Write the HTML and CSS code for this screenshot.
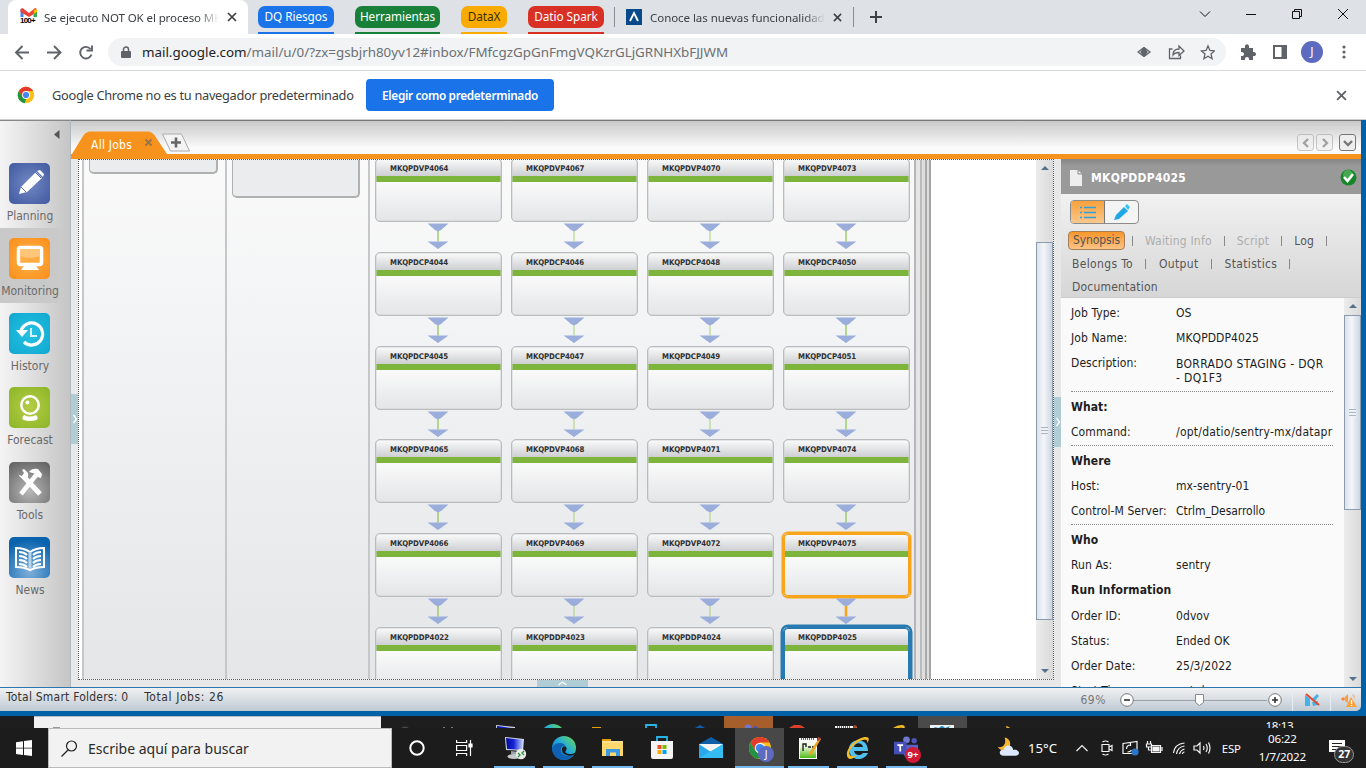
FILE: index.html
```html
<!DOCTYPE html>
<html lang="es">
<head>
<meta charset="utf-8">
<title>Control-M</title>
<link rel="stylesheet" href="styles.css">
</head>
<body>
<svg class="defs" aria-hidden="true">
  <defs>
    <linearGradient id="gEdge" x1="0" y1="1" x2="1" y2="0"><stop offset="0" stop-color="#0c59a4"/><stop offset=".5" stop-color="#1fa5e4"/><stop offset="1" stop-color="#6be24a"/></linearGradient>
    <linearGradient id="gScreen" x1="0" x2="1"><stop offset="0" stop-color="#000b9c"/><stop offset=".45" stop-color="#1523d8"/><stop offset="1" stop-color="#c5d4f8"/></linearGradient>
    <linearGradient id="gNpp" x2="0" y2="1"><stop offset="0" stop-color="#fff"/><stop offset=".4" stop-color="#e8f8d8"/><stop offset="1" stop-color="#4fb814"/></linearGradient>
    <symbol id="arrow" viewBox="0 0 22 31"><path d="M.5 1.500h21L14 8h-6zM.5 19.500h21L11 27z" fill="#9aaddb"/><path d="M7 7.500h8l-4 2z" fill="#9aaddb"/><path d="M11 9v10.500" stroke="currentColor" stroke-width="var(--w,1.2)"/></symbol>
    <symbol id="x" viewBox="0 0 10 10"><path d="M1 1l8 8M9 1l-8 8" fill="none" stroke="currentColor" stroke-width="1.7"/></symbol>
    <symbol id="pc" viewBox="0 0 24 24"><path d="M2 1l19 2-1 12-17-1z" fill="#d9dce2"/><path d="M3 2l17 1.800-1 10.200-15-1z" fill="url(#gScreen)"/><path d="M8 15l7 1v3l-7-1z" fill="#9ba0a6"/><ellipse cx="11" cy="20.500" rx="6.500" ry="2.500" fill="#c6c9cc"/><circle cx="18" cy="18" r="5.200" fill="#e8ebe8"/><path d="M15 17l2 2-2 2M21 15l-2 2 2 2" stroke="#2c8b3c" fill="none" stroke-width="1.300"/></symbol>
    <symbol id="edge" viewBox="0 0 24 24"><circle cx="12" cy="12" r="12" fill="url(#gEdge)"/><path d="M0 12C3 6 12 5 14 11c-2-3-6 0-5 4 1 5 7 6 13 3-5 9-21 8-22-6z" fill="#0f61b4"/><path d="M14 11c2 3-2 4 0 6 3 2 8 1 10-1l-1 2c-6 4-14 0-13-5 0-2 2-4 4-2z" fill="#1c1c1c"/></symbol>
    <symbol id="folder" viewBox="0 0 24 24"><path d="M1 3h9v5H1z" fill="#e5a000"/><path d="M1 5h21v15H1z" fill="#ffd76a"/><path d="M5 20v-7h14v7h-4v-3.500H9V20z" fill="#3c9be0"/><path d="M1 5h21v1.500H1z" fill="#ffe59b"/></symbol>
    <symbol id="store" viewBox="0 0 24 24"><path d="M7 5V1h10v4" fill="none" stroke="#28b4e8" stroke-width="1.800"/><path d="M1 5h22v16q0 2-2 2H3q-2 0-2-2z" fill="#f4f4f4"/><path d="M7.500 9h4v4h-4z" fill="#f25022"/><path d="M12.500 9h4v4h-4z" fill="#7fba00"/><path d="M7.500 14h4v4h-4z" fill="#ffa800"/><path d="M12.500 14h4v4h-4z" fill="#00a4ef"/></symbol>
    <symbol id="mail" viewBox="0 0 24 24"><path d="M0 8l12-7 12 7v4H0z" fill="#0f5ea8"/><path d="M0 8h24v14H0z" fill="#28a8ea"/><path d="M0 8h24l-12 8z" fill="#fff"/><path d="M0 8v14l24-14v14H0z" fill="#35bdf2"/><path d="M2 8h20l-10 6z" fill="#f3f3f3"/></symbol>
    <symbol id="chrome" viewBox="0 0 24 24"><circle cx="12" cy="12" r="11" fill="#fbc116"/><path d="M2.500 6.500A11 11 0 0 1 21.500 6.500H12L7.200 15z" fill="#e33b2e"/><path d="M2.500 6.500L7.200 14.700 12 17l-1.500 6A11 11 0 0 1 2.500 6.500z" fill="#229342"/><circle cx="12" cy="12" r="5.200" fill="#fff"/><circle cx="12" cy="12" r="4.100" fill="#4285f4"/></symbol>
    <symbol id="npp" viewBox="0 0 24 24"><path d="M2 2h18v21H2z" fill="#fff"/><path d="M3 3h16v19H3z" fill="url(#gNpp)"/><path d="M4 3h14" stroke="#666" stroke-width="2" stroke-dasharray="1 1"/><path d="M6 15V8h3v3M11 11h3M15 11h3" fill="none" stroke="#222" stroke-width="1.400"/><path d="M22 2l2 1-9 15-3 2 1-4z" fill="#eea51f"/><path d="M21 1l3 1-2 3-2-1z" fill="#b34436"/></symbol>
    <symbol id="ie" viewBox="0 0 24 24"><path d="M22 15H8c1 5 7 5 9 2h5C17 27 3 24 3 13 3 2 22 0 22 15zM8 11h9c-1-5-8-5-9 0z" fill="#4ec1ee"/><path d="M2 22C-3 15 10 1 20 1c4 0 3 4 1 6 1-3-1-4-4-3C9 6 1 15 4 19c1 2 5 1 7 0-4 4-7 5-9 3z" fill="#f2bb28"/></symbol>
    <symbol id="teams" viewBox="0 0 26 26"><circle cx="13" cy="4" r="3.500" fill="#7178d4"/><circle cx="21" cy="5" r="2.800" fill="#4d55b8"/><path d="M9 9h16v9q-2 6-8 5-7 0-8-7z" fill="#5a62c8"/><path d="M0 6h13v13H0z" fill="#464eb8"/><path d="M3.500 9.500h6M6.500 9.500V16" stroke="#fff" stroke-width="1.800"/></symbol>
    <symbol id="weather" viewBox="0 0 24 24"><path d="M8 1c6 1 8 8 3 12-4 3-9 1-10-2 6 1 9-4 7-10z" fill="#f7b72c"/><path d="M7 20c-6 0-5-7 0-6 1-6 9-6 10 0 7-1 8 6 2 6z" fill="#dce8fb"/></symbol>
  </defs>
</svg>

<div class="tabstrip">
  <div class="tab active">
    <svg class="gmail" width="17" height="17" viewBox="0 0 17 17"><path d="M.5 9V1l3 2v6z" fill="#4285f4"/><path d="M.5 1l2-1L9 5l6-5 2 1v3L9 9 .5 4z" fill="#ea4335"/><path d="M13.500 4L17 1v8h-3.500z" fill="#34a853"/><path d="M13.500 2L17 1v3l-3 2z" fill="#fbbc04"/></svg>
    <b class="count">100+</b>
    <span class="title">Se ejecuto NOT OK el proceso MKQ</span>
    <svg class="close" width="10" height="10"><use href="#x"/></svg>
  </div>
  <span class="group blue">DQ Riesgos</span>
  <span class="group green">Herramientas</span>
  <span class="group yellow">DataX</span>
  <span class="group red">Datio Spark</span>
  <div class="tab plain">
    <svg width="16" height="16"><path d="M0 0h16v16H0z" fill="#08498c"/><path d="M4 12l4-8 4 8" fill="none" stroke="#fff" stroke-width="1.800"/></svg>
    <span class="title">Conoce las nuevas funcionalidades</span>
    <svg class="close" width="9" height="9"><use href="#x"/></svg>
  </div>
  <svg class="plus" width="12" height="12"><path d="M6 0v12M0 6h12" stroke="#3c4043" stroke-width="2"/></svg>
  <svg class="winbtns" width="152" height="16" fill="none" stroke="#111"><path d="M2 5.500l5 5 5-5M48 8.500h10M94.500 5.500h7v7h-7zM96.500 5.500v-2h7v7h-2M140 3l10 10M150 3l-10 10"/></svg>
</div>

<div class="toolbar">
  <svg class="nav" width="84" height="20" fill="none" stroke="#5f6368" stroke-width="1.900"><path d="M15 10.500H2.500M8.500 4L2 10.500 8.500 17M33 10.500h12.500M40 4l6.500 6.500L40 17M76.500 7A5.800 5.800 0 1 0 77.500 12.500M78 3.500V8.500H72.500"/></svg>
  <div class="omnibox">
    <svg width="10" height="13"><path d="M2.500 5V3.500a2.500 2.500 0 0 1 5 0V5" fill="none" stroke="#5f6368" stroke-width="1.500"/><path d="M1 5h8q1 0 1 1v5q0 1-1 1H1q-1 0-1-1V6q0-1 1-1z" fill="#5f6368"/></svg>
    <span class="url"><i>mail.google.com</i>/mail/u/0/?zx=gsbjrh80yv12#inbox/FMfcgzGpGnFmgVQKzrGLjGRNHXbFJJWM</span>
    <svg class="omni" width="78" height="18" fill="none" stroke="#5f6368" stroke-width="1.300"><path d="M1 9l6-4.500L13 9l-6 4.500z" /><path d="M7 5l3 4-3 4-3-4z" fill="#5f6368"/><path d="M35.500 6h-3v9.500h11v-3M36 12c0-4 2-6 6-6V3l5 5-5 4.500V9.500c-3 0-5 1-6 2.500z"/><path d="M71 3l1.900 4.500 4.600.4-3.500 3.100 1.100 4.700-4.100-2.500-4.100 2.500 1.100-4.700-3.500-3.100 4.600-.4z"/></svg>
  </div>
  <svg width="16" height="16"><path d="M1 4h4c-1-5 5-5 4 0h4v4c4-1 4 5 0 4v4H9c1-4-5-4-4 0H1v-4c4 1 4-5 0-4z" fill="#5f6368"/></svg>
  <svg width="14" height="14"><path d="M1 1h12v12H1z" fill="none" stroke="#5f6368" stroke-width="2"/><path d="M8.500 1H13v12H8.500z" fill="#5f6368"/></svg>
  <span class="avatar">J</span>
  <svg class="dots" width="4" height="14" fill="#5f6368"><circle cx="2" cy="2" r="1.600"/><circle cx="2" cy="7" r="1.600"/><circle cx="2" cy="12" r="1.600"/></svg>
</div>

<div class="infobar">
  <svg width="18" height="18"><use href="#chrome"/></svg>
  <span>Google Chrome no es tu navegador predeterminado</span>
  <button>Elegir como predeterminado</button>
  <svg class="dismiss" width="11" height="11"><use href="#x"/></svg>
</div>

<div class="app">
  <div class="appbody">
    <nav class="side">
      <svg class="collapse" width="6" height="10"><path d="M5.500 0v9L0 4.500z" fill="#555"/></svg>
      <div class="item"><span class="ico planning"><svg width="41" height="41"><path d="M10 31l2-7L27 9l6 6-15 14z" fill="#fff"/><path d="M28 8l3-1 4 4-1 3z" fill="#fff"/><path d="M26 9l6 6M12 24l5 5" stroke="#5471b5"/></svg></span>Planning</div>
      <div class="item on"><span class="ico monitoring"><svg width="41" height="41"><rect x="9.500" y="9.500" width="23" height="17" rx="2" fill="#ffac43" stroke="#fff" stroke-width="3.500"/><path d="M11 11h20v7q-10 4-20 0z" fill="#ffc67a"/><path d="M15 28h12l3 4H12z" fill="#fff"/></svg></span>Monitoring</div>
      <div class="item"><span class="ico history"><svg width="41" height="41"><path d="M12 18A11 11 0 1 1 15 29" fill="none" stroke="#fff" stroke-width="3.200"/><path d="M7 17h12l-6 7z" fill="#fff"/><path d="M22 15v8h6" fill="none" stroke="#d8f4fa" stroke-width="2"/></svg></span>History</div>
      <div class="item"><span class="ico forecast"><svg width="41" height="41"><circle cx="21" cy="18" r="8.700" fill="none" stroke="#fff" stroke-width="2.500"/><path d="M15 28q6 3 12 0 3 3 .5 5-6.500 2-13 0-2.500-2 .5-5z" fill="#fff"/><circle cx="18.500" cy="15.500" r="2" fill="#fff"/></svg></span>Forecast</div>
      <div class="item"><span class="ico tools"><svg width="41" height="41"><path d="M14 14l17 18" stroke="#fff" stroke-width="5"/><path d="M9 9q1 9 8 8 3-2 2-6l-4-4-2 1 2 3-2 3-3-1z" fill="#fff"/><path d="M28 12L12 32" stroke="#fff" stroke-width="4.500"/><path d="M20 10q3-4 9-3l4 5-1 4-4-1-1-3z" fill="#fff"/></svg></span>Tools</div>
      <div class="item"><span class="ico news"><svg width="41" height="41" fill="none" stroke="#fff"><path d="M7 11q8 0 14 4 6-4 14-4v19q-8 0-14 3-6-3-14-3z" stroke-width="2"/><path d="M21 15v17" stroke-width="3" stroke="#b8d4ea"/><path d="M10 15q5 0 8 3M10 19q5 0 8 3M10 23q5 0 8 3M10 27q5 0 8 3M32 15q-5 0-8 3M32 19q-5 0-8 3M32 23q-5 0-8 3M32 27q-5 0-8 3" stroke-width="2"/></svg></span>News</div>
    </nav>

    <main class="main">
      <div class="jobtabs">
        <svg class="alljobs" width="120" height="25"><path d="M0 25L11 7q3-4.500 7-4.500h58q4 0 7 4.500l12 18z" fill="#f7931d"/><path d="M90.500 5h19l8 17h-19z" fill="#f4f4f4" stroke="#aaa"/><path d="M104 8.500v10M99 13.500h10" stroke="#666" stroke-width="2.600"/><path d="M73.500 10.500l6 6M79.500 10.500l-6 6" stroke="#99744a" stroke-width="2"/></svg>
        <span class="tabname">All Jobs</span>
        <span class="pager dim"><svg width="10" height="10"><path d="M7 1L3 5l4 4" /></svg></span>
        <span class="pager dim"><svg width="10" height="10"><path d="M3 1l4 4-4 4"/></svg></span>
        <span class="pager last"><svg width="10" height="10"><path d="M1 3l4 4 4-4"/></svg></span>
      </div>
      <div class="workspace">
        <div class="gutter"><span class="grip left"><svg width="7" height="50"><path d="M2.500 21l3 4-3 4" fill="none" stroke="#fff" stroke-width="1.300"/></svg></span></div>
        <div class="center">
          <div class="canvas">
            <div class="folder f1"><div class="stub"></div></div>
            <div class="folder f2"><div class="stub tall"></div></div>
            <div class="folder f3">
              <div class="grid">
                <div class="job">MKQPDVP4064</div><div class="job">MKQPDVP4067</div><div class="job">MKQPDVP4070</div><div class="job">MKQPDVP4073</div>
                <svg class="link"><use href="#arrow"/></svg><svg class="link pale"><use href="#arrow"/></svg><svg class="link pale"><use href="#arrow"/></svg><svg class="link"><use href="#arrow"/></svg>
                <div class="job">MKQPDCP4044</div><div class="job">MKQPDCP4046</div><div class="job">MKQPDCP4048</div><div class="job">MKQPDCP4050</div>
                <svg class="link"><use href="#arrow"/></svg><svg class="link pale"><use href="#arrow"/></svg><svg class="link pale"><use href="#arrow"/></svg><svg class="link"><use href="#arrow"/></svg>
                <div class="job">MKQPDCP4045</div><div class="job">MKQPDCP4047</div><div class="job">MKQPDCP4049</div><div class="job">MKQPDCP4051</div>
                <svg class="link"><use href="#arrow"/></svg><svg class="link pale"><use href="#arrow"/></svg><svg class="link pale"><use href="#arrow"/></svg><svg class="link"><use href="#arrow"/></svg>
                <div class="job">MKQPDVP4065</div><div class="job">MKQPDVP4068</div><div class="job">MKQPDVP4071</div><div class="job">MKQPDVP4074</div>
                <svg class="link"><use href="#arrow"/></svg><svg class="link pale"><use href="#arrow"/></svg><svg class="link pale"><use href="#arrow"/></svg><svg class="link"><use href="#arrow"/></svg>
                <div class="job">MKQPDVP4066</div><div class="job">MKQPDVP4069</div><div class="job">MKQPDVP4072</div><div class="job near">MKQPDVP4075</div>
                <svg class="link"><use href="#arrow"/></svg><svg class="link pale"><use href="#arrow"/></svg><svg class="link pale"><use href="#arrow"/></svg><svg class="link hot"><use href="#arrow"/></svg>
                <div class="job">MKQPDDP4022</div><div class="job">MKQPDDP4023</div><div class="job">MKQPDDP4024</div><div class="job picked">MKQPDDP4025</div>
              </div>
            </div>
            <div class="frames"></div>
            <div class="scroll"><i class="up"></i><i class="thumb"></i><i class="down"></i></div>
          </div>
          <div class="under"><span class="grip bottom"><svg width="51" height="7"><path d="M21.500 5l4-3 4 3" fill="none" stroke="#fff" stroke-width="1.300"/></svg></span></div>
        </div>
        <div class="gutter"><span class="grip right"><svg width="7" height="50"><path d="M2.500 21l3 4-3 4" fill="none" stroke="#fff" stroke-width="1.300"/></svg></span></div>

        <aside class="panel">
          <header><svg width="12" height="16"><path d="M0 0h8l4 4v12H0z" fill="#eee"/><path d="M8 0v4h4" fill="none" stroke="#888"/></svg><b>MKQPDDP4025</b><svg width="17" height="17"><circle cx="8.500" cy="8.500" r="8" fill="#15872a"/><circle cx="8" cy="6" r="5" fill="#46a94f"/><path d="M4 8l3.500 4L13 5" fill="none" stroke="#fff" stroke-width="2.600"/></svg></header>
          <div class="controls">
            <div class="toggle"><span class="sel"><svg width="18" height="14"><path d="M5 2.500h12M5 7.500h12M5 12.500h12M1 2.500h2M1 7.500h2M1 12.500h2" stroke="#2fa0da" stroke-width="1.700"/></svg></span><span><svg width="18" height="18"><path d="M1 17l2-5 8-8 4 4-9 8z" fill="#20a7e6"/><path d="M12 3l2-2 3 3-2 3z" fill="#35c3f4"/></svg></span></div>
            <div class="links l1"><em>Synopsis</em><s></s><span class="off">Waiting Info</span><s></s><span class="off">Script</span><s></s><span>Log</span><s></s></div>
            <div class="links l2"><span>Belongs To</span><s></s><span>Output</span><s></s><span>Statistics</span><s></s></div>
            <div class="links l3"><span>Documentation</span></div>
          </div>
          <div class="details">
            <div class="fields">
              <p><span>Job Type:</span>OS</p>
              <p><span>Job Name:</span>MKQPDDP4025</p>
              <p class="two"><span>Description:</span><q>BORRADO STAGING - DQR<br>- DQ1F3</q></p>
              <hr>
              <p><b>What:</b></p>
              <p class="wide"><span>Command:</span>/opt/datio/sentry-mx/datapr</p>
              <hr>
              <p><b>Where</b></p>
              <p><span>Host:</span>mx-sentry-01</p>
              <p class="snug"><span>Control-M Server:</span>Ctrlm_Desarrollo</p>
              <hr>
              <p><b>Who</b></p>
              <p><span>Run As:</span>sentry</p>
              <p><b>Run Information</b></p>
              <p><span>Order ID:</span>0dvov</p>
              <p><span>Status:</span>Ended OK</p>
              <p><span>Order Date:</span>25/3/2022</p>
              <p><span>Start Time:</span>unt doc</p>
            </div>
            <div class="scroll slim"><i class="up"></i><i class="thumb"></i><i class="down"></i></div>
          </div>
        </aside>
      </div>
    </main>
  </div>
  <div class="status">
    <span>Total Smart Folders: 0</span><span>Total Jobs: 26</span>
    <span class="zoom">69%</span>
    <svg width="156" height="16"><path d="M14 8.500h134" stroke="#999fa5"/><circle cx="8" cy="8" r="6.300" fill="#fff" stroke="#777"/><path d="M5 8h6" stroke="#333" stroke-width="1.600"/><path d="M76.500 2.500h8v8l-4 3-4-3z" fill="#fff" stroke="#888"/></svg>
    <svg class="zplus" width="14" height="14"><circle cx="7" cy="7" r="6.300" fill="#fff" stroke="#777"/><path d="M4 7h6M7 4v6" stroke="#333" stroke-width="1.600"/></svg>
    <span class="cell"><svg width="16" height="14"><path d="M1 2l5 4v7H1zM8 6l5-5 2 2-4 5zM8 9l6-1-1 4-4 1z" fill="#43b4e8"/><path d="M2 1l13 11" stroke="#e2482e" stroke-width="2"/></svg></span>
    <span class="cell end"><svg width="16" height="14"><path d="M0 6l2-2 2 2-2 2z" fill="#f5863c"/><path d="M3 5l4-4v9L4 8zM11 1q3 1 3 5" fill="#f5a04c"/><path d="M10 4l6 10H5z" fill="#f9a13c"/><path d="M10.500 7v4M10.500 12v1" stroke="#fff" stroke-width="1.300"/></svg></span>
  </div>
</div>

<div class="oldbar">
  <div class="oldsearch"><i></i></div>
  <svg class="oldleft" width="100" height="12" fill="#777"><path d="M20 11.500q4-1.500 8 0zM62 11h2v1h-2zM70 11h2v1h-2z"/></svg>
  <div class="apps">
    <span><svg width="24" height="24"><use href="#pc"/></svg></span>
    <span><svg width="24" height="24"><use href="#edge"/></svg></span>
    <span><svg width="24" height="24"><use href="#folder"/></svg></span>
    <span><svg width="24" height="24"><use href="#store"/></svg></span>
    <span><svg width="24" height="24"><use href="#mail"/></svg></span>
    <span class="alert"><svg width="24" height="24"><use href="#teams"/></svg></span>
    <span><svg width="24" height="24"><use href="#chrome"/></svg></span>
    <span><svg width="24" height="24"><use href="#npp"/></svg></span>
    <span><svg width="24" height="24"><use href="#ie"/></svg></span>
    <span class="lit"><svg width="24" height="24"><path d="M0 1h24v23H0z" fill="#f2f2f2"/><path d="M9 4q3-4 6 0l5-2-3 5H7L4 3z" fill="#2189bd"/></svg></span>
  </div>
  <svg class="oldmoon" width="24" height="24"><use href="#weather"/></svg>
  <span class="oldclock">18:13</span>
</div>

<div class="taskbar">
  <span class="start"><svg width="16" height="16" fill="#fff"><path d="M0 2.200l7-1v6.500H0zM8 1l8-1v7.700H8zM0 8.600h7V15l-7-1zM8 8.600h8V16l-8-1z"/></svg></span>
  <div class="search"><svg width="17" height="17" fill="none" stroke="#222" stroke-width="1.200"><circle cx="10.500" cy="6" r="5"/><path d="M7 10l-6.500 6.500"/></svg>Escribe aquí para buscar</div>
  <div class="apps">
    <span><svg width="18" height="18"><circle cx="9" cy="9" r="6.700" fill="none" stroke="#fff" stroke-width="2"/></svg></span>
    <span><svg width="17" height="16" fill="none" stroke="#fff" stroke-width="1.200"><path d="M.6 0v2.500h10V0M.6 5.500h10v5H.6zM.6 16v-2.500h10V16M14.500 0v16"/><path d="M13 4h3v3h-3z" fill="#fff"/></svg></span>
    <span class="run"><svg width="24" height="24"><use href="#pc"/></svg></span>
    <span class="run"><svg width="24" height="24"><use href="#edge"/></svg></span>
    <span class="run"><svg width="24" height="24"><use href="#folder"/></svg></span>
    <span><svg width="24" height="24"><use href="#store"/></svg></span>
    <span><svg width="24" height="24"><use href="#mail"/></svg></span>
    <span class="run cur"><svg width="24" height="24"><use href="#chrome"/></svg><b class="badge j">J</b></span>
    <span class="run"><svg width="24" height="24"><use href="#npp"/></svg></span>
    <span class="run"><svg width="24" height="24"><use href="#ie"/></svg></span>
    <span class="run"><svg width="25" height="25"><use href="#teams"/></svg><b class="badge nine">9+</b></span>
  </div>
  <div class="tray">
    <svg width="23" height="24"><use href="#weather"/></svg>
    <span class="temp">15°C</span>
    <svg class="trayicons" width="140" height="20" fill="none" stroke="#f4f4f4" stroke-width="1.200"><path d="M1 13l5.500-5.500L12 13M26.500 6.500h7v7h-7zM33.500 9l3-1.500v5l-3-1.500M27 4q3-2 6 0M27 16q3 2 6 0"/><path d="M47.500 5.500l14-2v12h-14zM51 11q0-4 4-4M55 5v3M56 12q-1 2-4 2"/><circle cx="59.500" cy="14" r="3.600" fill="#2a76c8" stroke="none"/><path d="M76 7.500h9v7h-9zM86.500 9v4" /><path d="M77.500 9h6v4h-6z" fill="#f4f4f4"/><path d="M72 3v3M75 3v3M71 6h5v3h-5zM73 9v3h3"/><path d="M98 15q1-9 11-10M101 16q1-7 8-8M104 16q1-4 5-5M107 16q0-2 2-2"/><path d="M118.500 8h3l3-3v10l-3-3h-3zM128 8q1 2 0 4M130.500 6q2.500 4 0 8M133 4.500q3 5.500 0 11"/></svg>
    <span class="lang">ESP</span>
    <span class="clock">06:22<br>1/7/2022</span>
    <span class="notes"><svg width="16" height="16"><path d="M0 0h16v12h-4v3l-4-3H0z" fill="#fff"/><path d="M3 3.500h10M3 6.500h10M3 9.500h7" stroke="#222"/></svg><b>27</b></span>
  </div>
</div>
</body>
</html>
```
FILE: styles.css
```css
* { box-sizing: border-box; }
body { margin: 0; width: 1366px; height: 768px; overflow: hidden; display: flex; flex-direction: column; background: #fff; font: 12px "Noto Sans", "Open Sans", sans-serif; color: #3c4043; white-space: nowrap; }
svg { display: block; flex: none; }
.defs { position: absolute; width: 0; height: 0; }

/* browser tabs */
.tabstrip { height: 34px; flex: none; display: flex; background: #dee1e6; }
.tab { display: flex; align-items: center; height: 34px; font-size: 11.5px; }
.tab .title { overflow: hidden; -webkit-mask-image: linear-gradient(90deg, #000 88%, transparent); mask-image: linear-gradient(90deg, #000 88%, transparent); }
.tab.active { position: relative; width: 240px; margin-left: 8px; padding-left: 12px; background: #fff; border-radius: 8px 8px 0 0; }
.tab.active .title { width: 175px; margin-left: 7px; letter-spacing: -.1px; }
.tab.active .close { margin-left: 8px; color: #3c4043; }
.gmail { margin-top: -1px; }
.count { position: absolute; left: 12px; top: 16px; font: bold 8px/10px "Liberation Sans", sans-serif; letter-spacing: -.8px; color: #000; text-shadow: 0 0 1px #fff, 0 0 1px #fff; }
.group { position: relative; margin-top: 6px; height: 22px; border-radius: 7px; color: #fff; font-size: 11.8px; letter-spacing: -.08px; line-height: 21px; text-align: center; }
.group::after { content: ""; position: absolute; left: 0; right: 0; top: 26px; height: 2px; background: inherit; }
.blue { width: 76px; margin-left: 10px; background: #1a73e8; }
.green { width: 85px; margin-left: 21px; background: #188038; }
.yellow { width: 46px; margin-left: 21px; background: #f9ab00; color: #3a3000; }
.red { width: 76px; margin-left: 21px; background: #d93025; }
.tab.plain { width: 240px; height: 20px; margin: 7px 0 0 10px; padding-left: 11px; border: 1px solid #8a8d91; border-width: 0 1px; }
.tab.plain .title { width: 175px; margin-left: 8px; letter-spacing: -.05px; }
.tab.plain .close { margin-left: 8px; }
.plus { margin: 11px 0 0 16px; }
.winbtns { margin: 6px 16px 0 auto; }

/* address bar */
.toolbar { height: 37px; flex: none; display: flex; align-items: center; border-bottom: 1px solid #d6d8db; padding-left: 14px; }
.nav { margin-right: 10px; }
.omnibox { width: 1118px; height: 28px; border-radius: 14px; background: #f1f3f4; display: flex; align-items: center; padding: 0 11px 0 13px; margin-right: 14px; }
.url { margin-left: 11px; font-size: 13.4px; letter-spacing: -.02px; color: #6c7075; flex: 1; }
.url i { font-style: normal; color: #202124; }
.toolbar > svg:nth-of-type(3) { margin-left: 17px; }
.avatar { width: 22px; height: 22px; border-radius: 50%; background: #5c6bc0; color: #fff; text-align: center; line-height: 22px; margin: 0 19px 0 14px; }

/* default-browser prompt */
.infobar { height: 49px; flex: none; display: flex; align-items: center; padding-left: 17px; border-bottom: 1px solid #cfcfcf; font-size: 12.8px; }
.infobar span { width: 302px; margin-left: 17px; letter-spacing: -.3px; }
.infobar button { width: 188px; height: 32px; margin-left: 12px; border: 0; border-radius: 4px; background: #1a73e8; color: #fff; font: 600 11.8px "Noto Sans", sans-serif; letter-spacing: -.34px; padding: 0; }
.dismiss { margin: 0 19px 0 auto; color: #5f6368; }

/* application frame */
.app { height: 596px; flex: none; background: #0060a8; font-family: "DejaVu Sans Condensed", "DejaVu Sans", sans-serif; font-stretch: condensed; }
.appbody { height: 567px; width: 1361px; display: flex; background: #e8e8e8; }
.side { width: 71px; flex: none; background: linear-gradient(90deg, #f4f4f4, #e4e4e4 35%, #c5c5c5); border-right: 1px solid #b0b8c0; border-top: 1px solid #888; color: #696969; }
.collapse { margin: 9px 0 0 54px; height: 23px; }
.item { height: 74.8px; padding-top: 10px; text-align: center; font-size: 12px; line-height: 25px; width: 60px; }
.item.on { width: 66px; padding-right: 6px; background: linear-gradient(90deg, #c9c9c9 85%, transparent); }
.ico { display: block; width: 41px; height: 41px; margin: 0 auto 0 9px; border-radius: 5px; }
.planning { background: radial-gradient(#7189c4, #41599f); }
.monitoring { background: radial-gradient(#ffb650, #fa8c16); }
.history { background: radial-gradient(#28c2e4, #0fa7cf); }
.forecast { background: radial-gradient(#b5cd45, #8bb528); }
.tools { background: radial-gradient(circle at 50% 70%, #b8b8b8, #5d5d5d); }
.news { background: radial-gradient(circle at 50% 85%, #7fb0da, #0a63ae 80%); }
.main { flex: 1; display: flex; flex-direction: column; min-width: 0; }
.jobtabs { height: 39px; flex: none; position: relative; display: flex; align-items: flex-end; justify-content: flex-end; gap: 2px; padding: 0 5px 3px 0; border-bottom: 5px solid #f7931d; background: linear-gradient(#c9c9c9, #fafafa 80%); border-top: 1px solid #777; }
.alljobs { position: absolute; left: 1px; bottom: 0; }
.tabname { position: absolute; left: 20px; bottom: 1px; font-size: 12px; line-height: 15px; letter-spacing: .25px; color: #fff; }
.pager { width: 17px; height: 17px; border: 1px solid #aaa; border-radius: 3px; background: #eee; display: grid; place-items: center; }
.pager svg { fill: none; stroke: #777; stroke-width: 2.3; }
.pager.dim { opacity: .65; }
.pager.last { margin-left: 4px; border-color: #777; }
.workspace { flex: 1; display: flex; min-height: 0; }
.gutter { width: 7px; flex: none; display: flex; align-items: flex-start; }
.grip { background: #b0ccd5; display: block; }
.grip.left { margin-top: 235px; }
.grip.right { margin-top: 238px; }
.center { width: 976px; flex: none; }
.canvas { height: 521px; border: 1px dotted #555; background: #fff; display: flex; padding-left: 3px; overflow: hidden; }
.under { height: 7px; padding-left: 459px; }
.grip.bottom { width: 51px; height: 7px; }
.folder { flex: none; background: linear-gradient(#fafafa, #f1f2f4 40%, #e5e6e8); border-left: 2px solid #c6c7c9; }
.f1 { width: 143px; padding-left: 5px; }
.f2 { width: 143px; padding-left: 5px; }
.f3 { width: 548px; border-right: 2px solid #b4b6b9; padding-left: 5px; }
.stub { width: 129px; height: 14px; border: 1px solid #b0b0b0; border-width: 0 2px 2px 1px; border-radius: 0 0 5px 5px; background: #ebecee; }
.stub.tall { height: 38px; width: 128px; }
.frames { width: 15px; flex: none; background: linear-gradient(90deg, #e5e5e5 0 4px, #bbb 4px 6px, #dedede 6px 9px, #a8a8a8 9px 11px, #ddd 11px 13px, #a5a5a5 13px); }

/* job nodes */
.grid { display: grid; grid-template-columns: repeat(4, 127px); column-gap: 9px; grid-template-rows: 64px 29.8px 64px 29.8px 64px 29.8px 64px 29.8px 64px 29.8px 64px; margin-top: -2px; }
.job { height: 64px; border: 1px solid #b9bbbd; border-radius: 5px; padding: 5px 0 0 14px; font-size: 7.8px; font-weight: bold; line-height: 10px; letter-spacing: -.1px; color: #303030; background: linear-gradient(#fbfbfb, #cdcfd2) 0 0 / 100% 17px no-repeat, linear-gradient(#7db43b, #7db43b) 0 17px / 100% 6px no-repeat, linear-gradient(#fafafa, #e3e5e7) 0 23px / 100% 39px no-repeat; box-shadow: inset 0 0 0 .5px #d0d2d4; }
.job.near { box-shadow: 0 0 0 1.5px #f9a51c, inset 0 0 0 1px #f9a51c; border-color: #f9a51c; }
.job.picked { box-shadow: 0 0 0 2.5px #2a7ab2, inset 0 0 0 1px #2a7ab2; border-color: #2a7ab2; }
.link { width: 22px; height: 31px; justify-self: center; color: #8bc34a; margin-left: -.5px; }
.link.pale { color: #b5d68e; }
.link.hot { color: #f9a51c; --w: 2.6; }

/* scrollbars */
.scroll { width: 17px; margin-left: auto; flex: none; background: linear-gradient(90deg, #ececec, #dadada); display: flex; flex-direction: column; align-items: center; }
.scroll .up, .scroll .down { border: 4px solid transparent; border-bottom-color: #56718a; margin-top: 2px; height: 8px; }
.scroll .down { border-bottom-color: transparent; border-top-color: #56718a; margin: auto 0 2px; }
.scroll .thumb { width: 17px; height: 378px; margin-top: 72px; border: 1px solid #8b9bab; background: repeating-linear-gradient(#a9b5c2 0 1px, #eef1f5 1px 3px) center / 7px 8px no-repeat, linear-gradient(90deg, #dbe2ea, #f4f6f9 45%, #cdd6e2); }
.scroll.slim .thumb { height: 195px; margin-top: 7px; }

/* job details */
.panel { width: 300px; flex: none; display: flex; flex-direction: column; background: #fafafa; font-size: 12px; }
.panel header { height: 35px; flex: none; display: flex; align-items: center; padding: 2px 4px 0 9px; background: linear-gradient(#858585, #999 20%); color: #fff; }
.panel header b { flex: 1; margin-left: 9px; font-size: 12px; letter-spacing: .28px; }
.controls { height: 104px; flex: none; background: linear-gradient(#f1f1f1, #d6d6d6); padding: 6px 0 0 7px; border-bottom: 1px solid #ccc; color: #555; letter-spacing: .2px; }
.toggle { display: flex; width: 69px; height: 24px; margin-left: 2px; border: 1px solid #8c8c8c; border-radius: 4px; overflow: hidden; background: #f4f4f4; }
.toggle span { flex: 1; display: grid; place-items: center; }
.toggle .sel { background: linear-gradient(#f8a13a, #fbc88e); border-right: 1px solid #777; }
.links { display: flex; align-items: center; height: 23px; padding-left: 4px; }
.l1 { margin-top: 5px; padding-left: 0; }
.links s { width: 1px; height: 10px; background: #888; margin: 0 12px; }
.l2 { letter-spacing: .34px; }
.l2 s { margin: 0 13px 0 12px; }
.links em { font-style: normal; border: 1px solid #a58055; border-radius: 4px; background: linear-gradient(#f8962a, #fcc386); height: 19px; line-height: 17px; padding: 0 0 0 4px; width: 57px; margin-right: -5px; letter-spacing: -.1px; }
.off { color: #adadad; }
.details { flex: 1; display: flex; min-height: 0; overflow: hidden; }
.fields { width: 272px; padding: 3px 0 0 10px; color: #1d1d1d; letter-spacing: .08px; }
.fields p { display: flex; height: 25.2px; margin: 0; line-height: 25px; }
.fields p span { width: 105px; flex: none; letter-spacing: .08px; }
.fields .two { height: 39.4px; }
.fields .wide { letter-spacing: .24px; }
.fields .snug { letter-spacing: -.05px; }
.fields q { quotes: none; line-height: 14px; padding-top: 6px; letter-spacing: .33px; }
.fields hr { height: 1px; margin: 0 0 2.8px; border: 0; border-top: 1px dotted #888; }

/* application status line */
.status { height: 24px; width: 1361px; display: flex; align-items: center; border-top: 1px solid #2f75ad; border-radius: 0 0 5px 0; background: linear-gradient(#f0f1f2, #bfcad4); padding-left: 6px; color: #333; letter-spacing: .22px; }
.status span + span { margin-left: 16px; }
.status > span:nth-child(2) { letter-spacing: .58px; }
.status > span:not(.zoom):not(.cell) { margin-top: -6px; }
.status .zoom { margin-left: auto !important; margin-right: 13px; color: #777; letter-spacing: .5px; }
.zplus { margin-left: -7px; }
.status .cell { width: 39px; height: 23px; margin: 0 0 0 10px !important; border-left: 1px solid #e8edf2; border-right: 1px solid #e8edf2; display: grid; place-items: center; }
.status .cell.end { width: 30px; margin: 0 !important; border: 0; padding-left: 5px; }

/* upper slice of taskbar */
.oldbar { height: 12px; flex: none; position: relative; display: flex; background: #1e1e1e; overflow: hidden; }
.oldsearch { width: 347px; margin-left: 34px; background: #f1f1f1; flex: none; border-top: 1px solid #bbb; }
.oldsearch i { display: block; width: 7px; height: 1px; margin: 10px 0 0 19px; background: #999; }
.oldleft { margin-right: .5px; }
.oldbar .apps { height: 40px; align-items: flex-start; width: 485px; }
.oldbar .apps span { padding-top: 8px; width: 48.5px; align-items: flex-start; height: 40px; }
.alert { background: #a65f2a; }
.lit { background: #4a4a4a; }
.oldmoon { margin: 9px 0 0 31px; }
.oldclock { margin: 2px 0 0 244px; color: #fff; font-size: 11.5px; line-height: 16px; letter-spacing: -.3px; }

/* taskbar */
.taskbar { height: 40px; flex: none; display: flex; background: #1c1c1c; color: #fff; }
.start { width: 48px; display: grid; place-items: center; }
.search { width: 344px; display: flex; align-items: center; gap: 10px; padding-left: 12px; border: 1px solid #bbb; background: #f2f2f2; color: #2b2b2b; font-size: 14px; }
.apps { display: flex; flex: none; }
.apps span { position: relative; width: 49px; display: flex; align-items: center; justify-content: center; }
.apps span:nth-child(2) svg { margin-left: -2px; }
.apps .run::after { content: ""; position: absolute; left: 4px; right: 4px; bottom: 0; height: 2px; background: #76b9ed; }
.apps .cur { background: #484848; }
.apps .cur::after { left: 0; right: 0; }
.badge { position: absolute; border-radius: 50%; width: 16px; height: 16px; font-size: 10px; line-height: 16px; text-align: center; }
.badge.j { left: 23px; top: 18px; background: #5c6bc0; font-weight: normal; }
.badge.nine { left: 23px; top: 19px; background: #d11a36; font-size: 9.5px; }
.tray { display: flex; align-items: center; margin-left: auto; width: 369px; }
.temp { width: 46px; margin-left: 8px; font-size: 13.2px; }
.trayicons { margin-left: -2px; width: 142px; }
.trayicons path, .trayicons circle { transform: translateX(3.5px); }
.lang { width: 26px; margin-left: 8px; font-size: 11.4px; letter-spacing: -.1px; }
.clock { width: 66px; margin-left: 2px; text-align: center; line-height: 18px; font-size: 11.6px; letter-spacing: -.15px; }
.notes { position: relative; margin-left: 14px; width: 37px; height: 40px; padding-top: 12px; }
.notes b { position: absolute; left: 5px; top: 18px; width: 20px; height: 17px; border: 1px solid #999; border-radius: 9px; background: #333; font-size: 10.5px; line-height: 15px; text-align: center; }
```
